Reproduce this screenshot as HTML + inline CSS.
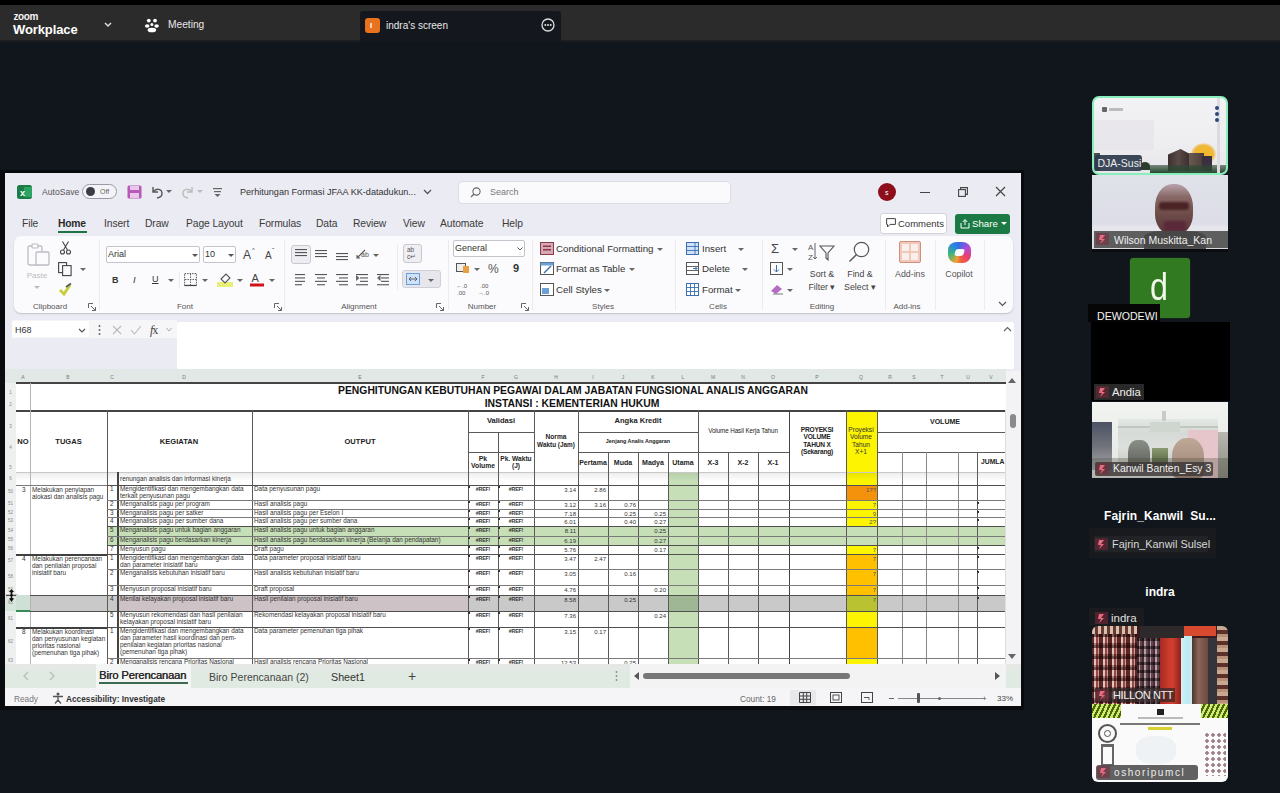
<!DOCTYPE html><html><head><meta charset="utf-8"><style>
*{margin:0;padding:0;box-sizing:border-box}
html,body{width:1280px;height:793px;overflow:hidden;background:#10161c;font-family:"Liberation Sans",sans-serif}
.a{position:absolute}
.t{position:absolute;white-space:nowrap;line-height:1}
svg{overflow:visible}
</style></head><body>
<div class="a" style="left:0px;top:0px;width:1280px;height:5px;background:#000;"></div>
<div class="a" style="left:0px;top:5px;width:1280px;height:35px;background:#2b2b2b;"></div>
<div class="a" style="left:0px;top:40px;width:1280px;height:2px;background:#1c1e22;"></div>
<div class="t" style="left:13.5px;top:11.5px;font-size:10px;color:#f4f4f4;font-weight:bold;letter-spacing:-0.4px">zoom</div>
<div class="t" style="left:13px;top:22.5px;font-size:13px;color:#fff;font-weight:bold;letter-spacing:-0.1px">Workplace</div>
<svg class="a" style="left:104px;top:21.5px;" width="8" height="6" viewBox="0 0 8 6"><path d="M1 1 L4 4 L7 1" stroke="#ddd" stroke-width="1.5" fill="none"/></svg>
<svg class="a" style="left:144px;top:17px;" width="17" height="16" viewBox="0 0 17 16"><circle cx="4.8" cy="3.6" r="1.9" fill="#fff"/><circle cx="11" cy="3.6" r="1.9" fill="#fff"/><ellipse cx="3.2" cy="9" rx="2.3" ry="1.8" fill="#fff"/><circle cx="7.9" cy="7.6" r="1.5" fill="#fff"/><ellipse cx="12.6" cy="9" rx="2.3" ry="1.8" fill="#fff"/><ellipse cx="7.9" cy="13" rx="4.3" ry="2.3" fill="#fff"/></svg>
<div class="t" style="left:168px;top:20.4px;font-size:10.2px;color:#e8e8e8;font-weight:normal;">Meeting</div>
<div class="a" style="left:360px;top:11px;width:201px;height:31px;background:#14181e;border-radius:3px 3px 0 0"></div>
<div class="a" style="left:365px;top:18px;width:15px;height:15px;background:#e8731c;border-radius:3px"></div>
<div class="t" style="left:370px;top:21.5px;font-size:8px;color:#fff;font-weight:bold;">I</div>
<div class="t" style="left:386px;top:20.5px;font-size:10px;color:#e8e8e8;font-weight:normal;">indra's screen</div>
<svg class="a" style="left:541px;top:18px;" width="14" height="14" viewBox="0 0 14 14"><circle cx="7" cy="7" r="6" stroke="#ddd" stroke-width="1.3" fill="none"/><circle cx="4.3" cy="7" r="1" fill="#ddd"/><circle cx="7" cy="7" r="1" fill="#ddd"/><circle cx="9.7" cy="7" r="1" fill="#ddd"/></svg>
<div class="a" style="left:0px;top:170px;width:1024px;height:540px;background:#090b0f;"></div>
<div class="a" style="left:5px;top:173px;width:1016px;height:533px;background:#ebebf3;"></div>
<svg class="a" style="left:17px;top:185px;" width="15" height="14" viewBox="0 0 15 14"><rect x="0" y="0" width="15" height="14" rx="2.5" fill="#1d7b45"/><rect x="7" y="2" width="8" height="10" fill="#2ea464"/><text x="3" y="10.5" font-size="9" font-weight="bold" fill="#fff" font-family="Liberation Sans">x</text></svg>
<div class="t" style="left:42px;top:188.2px;font-size:8.6px;color:#555;font-weight:normal;">AutoSave</div>
<div class="a" style="left:82px;top:184px;width:35px;height:15px;background:#f4f4f8;border:1px solid #9a9aa6;border-radius:8px"></div>
<div class="a" style="left:86px;top:187px;width:9px;height:9px;border-radius:50%;background:#3c3c48"></div>
<div class="t" style="left:100px;top:188.0px;font-size:7px;color:#666;font-weight:normal;">Off</div>
<svg class="a" style="left:127px;top:185px;" width="15" height="14" viewBox="0 0 15 14"><rect x="0.5" y="0.5" width="14" height="13" rx="1.5" fill="#b659b8"/><rect x="3" y="1" width="9" height="4" fill="#e9c6ea"/><rect x="3" y="8" width="9" height="5" fill="#e9c6ea"/></svg>
<svg class="a" style="left:150px;top:185px;" width="14" height="14" viewBox="0 0 14 14"><path d="M3 2 L3 7 L8 7" stroke="#555" stroke-width="1.4" fill="none"/><path d="M3.3 6.7 C6 3, 12 3.5, 12 8.5 C12 11, 10 12.5, 7 13" stroke="#555" stroke-width="1.4" fill="none"/></svg>
<svg class="a" style="left:166px;top:190px;" width="6" height="4" viewBox="0 0 6 4"><path d="M0 0 L6 0 L3 3z" fill="#666"/></svg>
<svg class="a" style="left:181px;top:185px;" width="14" height="14" viewBox="0 0 14 14"><path d="M11 2 L11 7 L6 7" stroke="#bbb" stroke-width="1.4" fill="none"/><path d="M10.7 6.7 C8 3, 2 3.5, 2 8.5 C2 11, 4 12.5, 7 13" stroke="#bbb" stroke-width="1.4" fill="none"/></svg>
<svg class="a" style="left:197px;top:190px;" width="6" height="4" viewBox="0 0 6 4"><path d="M0 0 L6 0 L3 3z" fill="#bbb"/></svg>
<svg class="a" style="left:213px;top:187px;" width="9" height="10" viewBox="0 0 9 10"><rect x="0" y="1" width="9" height="1.2" fill="#666"/><rect x="1" y="4" width="7" height="1.2" fill="#666"/><path d="M1.5 7 L7.5 7 L4.5 10z" fill="#666"/></svg>
<div class="t" style="left:240px;top:187.9px;font-size:9.1px;color:#333;font-weight:normal;">Perhitungan Formasi JFAA KK-datadukun...</div>
<svg class="a" style="left:423px;top:189px;" width="9" height="6" viewBox="0 0 9 6"><path d="M1 1 L4.5 4.5 L8 1" stroke="#555" stroke-width="1.3" fill="none"/></svg>
<div class="a" style="left:458px;top:181px;width:273px;height:23px;background:#fafafd;border:1px solid #dcdce6;border-radius:4px"></div>
<svg class="a" style="left:470px;top:187px;" width="11" height="11" viewBox="0 0 11 11"><circle cx="6.5" cy="4.5" r="3.6" stroke="#666" stroke-width="1.1" fill="none"/><path d="M4 7 L1 10" stroke="#666" stroke-width="1.2"/></svg>
<div class="t" style="left:490px;top:188.0px;font-size:9px;color:#777;font-weight:normal;">Search</div>
<div class="a" style="left:878px;top:183px;width:18px;height:18px;border-radius:50%;background:#8e0f1c"></div>
<div class="t" style="left:885px;top:188.5px;font-size:7px;color:#fff;font-weight:normal;">s</div>
<div class="a" style="left:920px;top:192px;width:10px;height:1.2px;background:#444;"></div>
<svg class="a" style="left:958px;top:187px;" width="10" height="10" viewBox="0 0 10 10"><rect x="0.6" y="2.6" width="6.8" height="6.8" stroke="#444" stroke-width="1.1" fill="none"/><path d="M2.6 2.5 L2.6 0.6 L9.4 0.6 L9.4 7.4 L7.5 7.4" stroke="#444" stroke-width="1.1" fill="none"/></svg>
<svg class="a" style="left:995px;top:186px;" width="11" height="11" viewBox="0 0 11 11"><path d="M1 1 L10 10 M10 1 L1 10" stroke="#444" stroke-width="1.2"/></svg>
<div class="t" style="left:22px;top:219.3px;font-size:10.3px;color:#3b3b3b;font-weight:normal;letter-spacing:-0.1px">File</div>
<div class="t" style="left:58px;top:219.3px;font-size:10.3px;color:#2b2b2b;font-weight:bold;letter-spacing:-0.2px">Home</div>
<div class="t" style="left:104px;top:219.3px;font-size:10.3px;color:#3b3b3b;font-weight:normal;letter-spacing:-0.1px">Insert</div>
<div class="t" style="left:145px;top:219.3px;font-size:10.3px;color:#3b3b3b;font-weight:normal;letter-spacing:-0.1px">Draw</div>
<div class="t" style="left:186px;top:219.3px;font-size:10.3px;color:#3b3b3b;font-weight:normal;letter-spacing:-0.1px">Page Layout</div>
<div class="t" style="left:259px;top:219.3px;font-size:10.3px;color:#3b3b3b;font-weight:normal;letter-spacing:-0.1px">Formulas</div>
<div class="t" style="left:316px;top:219.3px;font-size:10.3px;color:#3b3b3b;font-weight:normal;letter-spacing:-0.1px">Data</div>
<div class="t" style="left:353px;top:219.3px;font-size:10.3px;color:#3b3b3b;font-weight:normal;letter-spacing:-0.1px">Review</div>
<div class="t" style="left:403px;top:219.3px;font-size:10.3px;color:#3b3b3b;font-weight:normal;letter-spacing:-0.1px">View</div>
<div class="t" style="left:440px;top:219.3px;font-size:10.3px;color:#3b3b3b;font-weight:normal;letter-spacing:-0.1px">Automate</div>
<div class="t" style="left:502px;top:219.3px;font-size:10.3px;color:#3b3b3b;font-weight:normal;letter-spacing:-0.1px">Help</div>
<div class="a" style="left:58px;top:231px;width:29px;height:2px;background:#217346;"></div>
<div class="a" style="left:880px;top:213px;width:67px;height:21px;background:#fff;border:1px solid #d2d2da;border-radius:3px"></div>
<svg class="a" style="left:886px;top:218px;" width="10" height="10" viewBox="0 0 10 10"><path d="M0.6 0.6 H9.4 V6.4 H4 L1.5 9 V6.4 H0.6 Z" stroke="#444" stroke-width="1" fill="none"/></svg>
<div class="t" style="left:898px;top:218.8px;font-size:9.5px;color:#333;font-weight:normal;">Comments</div>
<div class="a" style="left:955px;top:214px;width:55px;height:20px;background:#1b7a43;border-radius:3px"></div>
<svg class="a" style="left:960px;top:218px;" width="11" height="11" viewBox="0 0 11 11"><path d="M1 5 V10 H9 V5" stroke="#fff" stroke-width="1" fill="none"/><path d="M5 7 V2 M2.8 4 L5 1.5 L7.2 4" stroke="#fff" stroke-width="1" fill="none"/></svg>
<div class="t" style="left:972px;top:218.7px;font-size:9.7px;color:#fff;font-weight:normal;">Share</div>
<svg class="a" style="left:1001px;top:222px;" width="6" height="3" viewBox="0 0 6 3"><path d="M0 0 H6 L3 3z" fill="#fff"/></svg>
<div class="a" style="left:14px;top:236px;width:999px;height:77px;background:#fbfbfd;border-radius:7px;box-shadow:0 1px 1.5px rgba(0,0,0,.18)"></div>
<svg class="a" style="left:27px;top:243px;" width="24" height="24" viewBox="0 0 24 24"><rect x="1" y="3" width="14" height="19" rx="1.5" stroke="#bdbdc4" stroke-width="1.3" fill="none"/><rect x="5" y="1" width="6" height="4" rx="1" stroke="#bdbdc4" stroke-width="1.2" fill="#fbfbfd"/><rect x="9" y="9" width="13" height="13" rx="1" stroke="#bdbdc4" stroke-width="1.3" fill="#fbfbfd"/></svg>
<div class="t" style="left:-463px;width:1000px;text-align:center;top:272.0px;font-size:8px;color:#bbb;font-weight:normal;">Paste</div>
<svg class="a" style="left:34px;top:286px;" width="6" height="3" viewBox="0 0 6 3"><path d="M0 0 H6 L3 3z" fill="#bbb"/></svg>
<svg class="a" style="left:60px;top:241px;" width="11" height="14" viewBox="0 0 11 14"><circle cx="2.5" cy="11" r="2" stroke="#444" stroke-width="1.1" fill="none"/><circle cx="8.5" cy="11" r="2" stroke="#444" stroke-width="1.1" fill="none"/><path d="M3.5 9 L8.5 0.5 M7.5 9 L2.5 0.5" stroke="#444" stroke-width="1.1"/></svg>
<svg class="a" style="left:58px;top:262px;" width="14" height="14" viewBox="0 0 14 14"><rect x="0.6" y="0.6" width="8" height="10" stroke="#444" stroke-width="1.1" fill="none"/><rect x="4.6" y="3.6" width="8.5" height="10" stroke="#444" stroke-width="1.1" fill="#fbfbfd"/></svg>
<svg class="a" style="left:80px;top:268px;" width="6" height="3" viewBox="0 0 6 3"><path d="M0 0 H6 L3 3z" fill="#666"/></svg>
<svg class="a" style="left:58px;top:283px;" width="14" height="13" viewBox="0 0 14 13"><path d="M2 7 L6 11 L12 2" stroke="#c8cf3a" stroke-width="3" fill="none"/><path d="M8 4 L13 0.5" stroke="#555" stroke-width="1.6"/></svg>
<div class="t" style="left:-450px;width:1000px;text-align:center;top:303.0px;font-size:8px;color:#555;font-weight:normal;">Clipboard</div>
<svg class="a" style="left:88px;top:303px;" width="8" height="8" viewBox="0 0 8 8"><path d="M0.5 0.5 H5 M0.5 0.5 V5" stroke="#666" stroke-width="1"/><path d="M3 3 L7.5 7.5 M7.5 4 V7.5 H4" stroke="#666" stroke-width="1" fill="none"/></svg>
<div class="a" style="left:99px;top:240px;width:1px;height:70px;background:#ebebef;"></div>
<div class="a" style="left:106px;top:246px;width:94px;height:17px;background:#fff;border:1px solid #c4c4cc;border-radius:2px"></div>
<div class="t" style="left:108px;top:250.0px;font-size:9px;color:#333;font-weight:normal;">Arial</div>
<svg class="a" style="left:192px;top:254px;" width="6" height="3" viewBox="0 0 6 3"><path d="M0 0 H6 L3 3z" fill="#555"/></svg>
<div class="a" style="left:203px;top:246px;width:33px;height:17px;background:#fff;border:1px solid #c4c4cc;border-radius:2px"></div>
<div class="t" style="left:205px;top:250.0px;font-size:9px;color:#333;font-weight:normal;">10</div>
<svg class="a" style="left:228px;top:254px;" width="6" height="3" viewBox="0 0 6 3"><path d="M0 0 H6 L3 3z" fill="#555"/></svg>
<div class="t" style="left:243px;top:248.5px;font-size:12px;color:#444;font-weight:normal;">A</div>
<div class="t" style="left:252px;top:247.0px;font-size:6px;color:#444;font-weight:normal;">^</div>
<div class="t" style="left:265px;top:250.5px;font-size:10px;color:#444;font-weight:normal;">A</div>
<div class="t" style="left:272px;top:246.5px;font-size:7px;color:#444;font-weight:normal;">ˇ</div>
<div class="t" style="left:112px;top:275.5px;font-size:9px;color:#333;font-weight:bold;">B</div>
<div class="t" style="left:133px;top:275.2px;font-size:9.5px;color:#333;font-weight:normal;font-style:italic">I</div>
<div class="t" style="left:152px;top:274.5px;font-size:9px;color:#333;font-weight:normal;text-decoration:underline">U</div>
<svg class="a" style="left:168px;top:279px;" width="6" height="3" viewBox="0 0 6 3"><path d="M0 0 H6 L3 3z" fill="#666"/></svg>
<div class="a" style="left:179px;top:272px;width:1px;height:16px;background:#ebebef;"></div>
<svg class="a" style="left:184px;top:273px;" width="13" height="13" viewBox="0 0 13 13"><rect x="0.6" y="0.6" width="11.8" height="11.8" stroke="#555" stroke-width="1" fill="none" stroke-dasharray="1.5 1"/><path d="M6.5 1 V12 M1 6.5 H12" stroke="#555" stroke-width="0.9" stroke-dasharray="1.5 1"/><path d="M0.5 12.5 H12.5" stroke="#444" stroke-width="1.2"/></svg>
<svg class="a" style="left:202px;top:279px;" width="6" height="3" viewBox="0 0 6 3"><path d="M0 0 H6 L3 3z" fill="#666"/></svg>
<svg class="a" style="left:217px;top:272px;" width="16" height="15" viewBox="0 0 16 15"><rect x="0" y="10" width="16" height="5" fill="#e8f07a"/><path d="M4 7 L9 2 L13 6 L8 11z" stroke="#555" stroke-width="1.1" fill="none"/></svg>
<svg class="a" style="left:237px;top:279px;" width="6" height="3" viewBox="0 0 6 3"><path d="M0 0 H6 L3 3z" fill="#666"/></svg>
<svg class="a" style="left:250px;top:272px;" width="14" height="15" viewBox="0 0 14 15"><text x="1.5" y="10" font-size="11" fill="#444" font-family="Liberation Sans">A</text><rect x="0" y="11.5" width="14" height="3" fill="#d0121b"/></svg>
<svg class="a" style="left:269px;top:279px;" width="6" height="3" viewBox="0 0 6 3"><path d="M0 0 H6 L3 3z" fill="#666"/></svg>
<div class="t" style="left:-315px;width:1000px;text-align:center;top:303.0px;font-size:8px;color:#555;font-weight:normal;">Font</div>
<svg class="a" style="left:274px;top:303px;" width="8" height="8" viewBox="0 0 8 8"><path d="M0.5 0.5 H5 M0.5 0.5 V5" stroke="#666" stroke-width="1"/><path d="M3 3 L7.5 7.5 M7.5 4 V7.5 H4" stroke="#666" stroke-width="1" fill="none"/></svg>
<div class="a" style="left:284px;top:240px;width:1px;height:70px;background:#ebebef;"></div>
<div class="a" style="left:291px;top:245px;width:20px;height:19px;background:#eeeef2;border:1px solid #c8c8d0;border-radius:3px"></div>
<svg class="a" style="left:295px;top:249px;" width="12" height="9" viewBox="0 0 12 9"><rect x="0.0" y="0" width="12" height="1.1" fill="#555"/><rect x="0.0" y="3" width="12" height="1.1" fill="#555"/><rect x="0.0" y="6" width="12" height="1.1" fill="#555"/></svg>
<svg class="a" style="left:315px;top:250px;" width="12" height="9" viewBox="0 0 12 9"><rect x="0.0" y="0" width="12" height="1.1" fill="#555"/><rect x="0.0" y="3" width="12" height="1.1" fill="#555"/><rect x="0.0" y="6" width="12" height="1.1" fill="#555"/></svg>
<svg class="a" style="left:336px;top:253px;" width="12" height="9" viewBox="0 0 12 9"><rect x="0.0" y="0" width="12" height="1.1" fill="#555"/><rect x="0.0" y="3" width="12" height="1.1" fill="#555"/><rect x="0.0" y="6" width="12" height="1.1" fill="#555"/></svg>
<svg class="a" style="left:356px;top:248px;" width="19" height="12" viewBox="0 0 19 12"><path d="M1 10 L9 2 M4 10 L1 10 L1 7" stroke="#555" stroke-width="1.1" fill="none"/><text x="5" y="9" font-size="7" fill="#555" font-family="Liberation Sans">ab</text></svg>
<svg class="a" style="left:373px;top:254px;" width="6" height="3" viewBox="0 0 6 3"><path d="M0 0 H6 L3 3z" fill="#666"/></svg>
<svg class="a" style="left:295px;top:274px;" width="12" height="13.6" viewBox="0 0 12 13.6"><rect x="0" y="0.0" width="10" height="1.1" fill="#555"/><rect x="0" y="3.4" width="10" height="1.1" fill="#555"/><rect x="0" y="6.8" width="10" height="1.1" fill="#555"/><rect x="0" y="10.2" width="7" height="1.1" fill="#555"/></svg>
<svg class="a" style="left:315px;top:274px;" width="12" height="13.6" viewBox="0 0 12 13.6"><rect x="0.0" y="0.0" width="12" height="1.1" fill="#555"/><rect x="2.0" y="3.4" width="8" height="1.1" fill="#555"/><rect x="0.0" y="6.8" width="12" height="1.1" fill="#555"/><rect x="2.0" y="10.2" width="8" height="1.1" fill="#555"/></svg>
<svg class="a" style="left:336px;top:274px;" width="12" height="13.6" viewBox="0 0 12 13.6"><rect x="0" y="0.0" width="12" height="1.1" fill="#555"/><rect x="3" y="3.4" width="9" height="1.1" fill="#555"/><rect x="0" y="6.8" width="12" height="1.1" fill="#555"/><rect x="3" y="10.2" width="9" height="1.1" fill="#555"/></svg>
<svg class="a" style="left:356px;top:274px;" width="12" height="13.6" viewBox="0 0 12 13.6"><rect x="0" y="0.0" width="12" height="1.1" fill="#555"/><rect x="4" y="3.4" width="8" height="1.1" fill="#555"/><rect x="4" y="6.8" width="8" height="1.1" fill="#555"/><rect x="0" y="10.2" width="12" height="1.1" fill="#555"/></svg>
<svg class="a" style="left:356px;top:275px;" width="4" height="6" viewBox="0 0 4 6"><path d="M0 0 L3.5 3 L0 6z" fill="#666"/></svg>
<svg class="a" style="left:377px;top:274px;" width="12" height="13.6" viewBox="0 0 12 13.6"><rect x="0" y="0.0" width="12" height="1.1" fill="#555"/><rect x="4" y="3.4" width="8" height="1.1" fill="#555"/><rect x="4" y="6.8" width="8" height="1.1" fill="#555"/><rect x="0" y="10.2" width="12" height="1.1" fill="#555"/></svg>
<svg class="a" style="left:377px;top:275px;" width="4" height="6" viewBox="0 0 4 6"><path d="M3.5 0 L0 3 L3.5 6z" fill="#666"/></svg>
<div class="a" style="left:397px;top:245px;width:1px;height:45px;background:#ebebef;"></div>
<div class="a" style="left:403px;top:244px;width:19px;height:19px;background:#efeff3;border:1px solid #c8c8d0;border-radius:3px"></div>
<div class="t" style="left:407px;top:246.8px;font-size:6.5px;color:#555;font-weight:normal;">ab</div>
<div class="t" style="left:407px;top:253.8px;font-size:6.5px;color:#555;font-weight:normal;">c↵</div>
<div class="a" style="left:402px;top:270px;width:39px;height:18px;background:#e6e6ec;border:1px solid #d0d0d8;border-radius:3px"></div>
<svg class="a" style="left:406px;top:273px;" width="14" height="12" viewBox="0 0 14 12"><rect x="0.5" y="0.5" width="13" height="11" stroke="#6aa0d8" stroke-width="1" fill="#cfe2f7"/><path d="M3 6 H11 M3 6 L5 4 M3 6 L5 8 M11 6 L9 4 M11 6 L9 8" stroke="#555" stroke-width="0.9" fill="none"/></svg>
<svg class="a" style="left:428px;top:279px;" width="6" height="3" viewBox="0 0 6 3"><path d="M0 0 H6 L3 3z" fill="#666"/></svg>
<div class="t" style="left:-141px;width:1000px;text-align:center;top:303.0px;font-size:8px;color:#555;font-weight:normal;">Alignment</div>
<svg class="a" style="left:436px;top:303px;" width="8" height="8" viewBox="0 0 8 8"><path d="M0.5 0.5 H5 M0.5 0.5 V5" stroke="#666" stroke-width="1"/><path d="M3 3 L7.5 7.5 M7.5 4 V7.5 H4" stroke="#666" stroke-width="1" fill="none"/></svg>
<div class="a" style="left:448px;top:240px;width:1px;height:70px;background:#ebebef;"></div>
<div class="a" style="left:453px;top:240px;width:72px;height:17px;background:#fff;border:1px solid #c4c4cc;border-radius:2px"></div>
<div class="t" style="left:455px;top:244.0px;font-size:9px;color:#333;font-weight:normal;">General</div>
<svg class="a" style="left:517px;top:247px;" width="6" height="4" viewBox="0 0 6 4"><path d="M0.5 0.5 L3 3 L5.5 0.5" stroke="#555" stroke-width="1" fill="none"/></svg>
<svg class="a" style="left:456px;top:263px;" width="14" height="11" viewBox="0 0 14 11"><rect x="0.5" y="0.5" width="9" height="8" stroke="#555" stroke-width="1" fill="#eee"/><rect x="7" y="3" width="6" height="7" fill="#e8a040"/></svg>
<svg class="a" style="left:474px;top:268px;" width="6" height="3" viewBox="0 0 6 3"><path d="M0 0 H6 L3 3z" fill="#666"/></svg>
<div class="t" style="left:488px;top:262.5px;font-size:12px;color:#555;font-weight:normal;">%</div>
<div class="t" style="left:513px;top:263.0px;font-size:11px;color:#333;font-weight:bold;">9</div>
<svg class="a" style="left:456px;top:282px;" width="14" height="14" viewBox="0 0 14 14"><text x="0" y="6" font-size="6" fill="#555" font-family="Liberation Sans">←.0</text><text x="1" y="13" font-size="6" fill="#555" font-family="Liberation Sans">.00</text></svg>
<svg class="a" style="left:478px;top:282px;" width="14" height="14" viewBox="0 0 14 14"><text x="2" y="6" font-size="6" fill="#555" font-family="Liberation Sans">.00</text><text x="0" y="13" font-size="6" fill="#555" font-family="Liberation Sans">→.0</text></svg>
<div class="t" style="left:-18px;width:1000px;text-align:center;top:303.0px;font-size:8px;color:#555;font-weight:normal;">Number</div>
<svg class="a" style="left:521px;top:303px;" width="8" height="8" viewBox="0 0 8 8"><path d="M0.5 0.5 H5 M0.5 0.5 V5" stroke="#666" stroke-width="1"/><path d="M3 3 L7.5 7.5 M7.5 4 V7.5 H4" stroke="#666" stroke-width="1" fill="none"/></svg>
<div class="a" style="left:532px;top:240px;width:1px;height:70px;background:#ebebef;"></div>
<svg class="a" style="left:540px;top:242px;" width="14" height="13" viewBox="0 0 14 13"><rect x="0.5" y="0.5" width="13" height="12" stroke="#8a3a4a" stroke-width="1" fill="#d8a8b4"/><rect x="3" y="3.5" width="8" height="1.5" fill="#8a3a4a"/><rect x="3" y="7" width="8" height="1.5" fill="#8a3a4a"/></svg>
<div class="t" style="left:556px;top:243.7px;font-size:9.7px;color:#333;font-weight:normal;">Conditional Formatting</div>
<svg class="a" style="left:657px;top:248px;" width="6" height="3" viewBox="0 0 6 3"><path d="M0 0 H6 L3 3z" fill="#666"/></svg>
<svg class="a" style="left:540px;top:262px;" width="14" height="13" viewBox="0 0 14 13"><rect x="0.5" y="0.5" width="13" height="12" stroke="#555" stroke-width="1" fill="#fff"/><rect x="0.5" y="0.5" width="13" height="3" fill="#6aa0d8"/><path d="M4 11 L11 4" stroke="#3a6fb0" stroke-width="1.5"/></svg>
<div class="t" style="left:556px;top:263.6px;font-size:9.7px;color:#333;font-weight:normal;">Format as Table</div>
<svg class="a" style="left:629px;top:268px;" width="6" height="3" viewBox="0 0 6 3"><path d="M0 0 H6 L3 3z" fill="#666"/></svg>
<svg class="a" style="left:540px;top:283px;" width="14" height="13" viewBox="0 0 14 13"><rect x="0.5" y="0.5" width="13" height="12" stroke="#555" stroke-width="1" fill="#fff"/><rect x="2" y="5" width="7" height="6" fill="#6aa0d8"/></svg>
<div class="t" style="left:556px;top:284.6px;font-size:9.7px;color:#333;font-weight:normal;">Cell Styles</div>
<svg class="a" style="left:604px;top:289px;" width="6" height="3" viewBox="0 0 6 3"><path d="M0 0 H6 L3 3z" fill="#666"/></svg>
<div class="t" style="left:103px;width:1000px;text-align:center;top:303.0px;font-size:8px;color:#555;font-weight:normal;">Styles</div>
<div class="a" style="left:675px;top:240px;width:1px;height:70px;background:#ebebef;"></div>
<svg class="a" style="left:686px;top:242px;" width="13" height="13" viewBox="0 0 13 13"><rect x="0.5" y="0.5" width="12" height="12" stroke="#3a6fb0" stroke-width="1" fill="#cfe2f7"/><path d="M0.5 4.5 H12.5 M0.5 8.5 H12.5 M9 0.5 V12.5" stroke="#3a6fb0" stroke-width="0.9"/></svg>
<div class="t" style="left:702px;top:243.7px;font-size:9.7px;color:#333;font-weight:normal;">Insert</div>
<svg class="a" style="left:738px;top:248px;" width="6" height="3" viewBox="0 0 6 3"><path d="M0 0 H6 L3 3z" fill="#666"/></svg>
<svg class="a" style="left:686px;top:262px;" width="13" height="13" viewBox="0 0 13 13"><rect x="0.5" y="0.5" width="12" height="12" stroke="#555" stroke-width="1" fill="#fff"/><path d="M0.5 4.5 H12.5 M0.5 8.5 H12.5" stroke="#555" stroke-width="0.9"/><path d="M7 6.5 L11 6.5 M9.5 5 L11 6.5 L9.5 8" stroke="#3a6fb0" stroke-width="1" fill="none"/></svg>
<div class="t" style="left:702px;top:263.6px;font-size:9.7px;color:#333;font-weight:normal;">Delete</div>
<svg class="a" style="left:742px;top:268px;" width="6" height="3" viewBox="0 0 6 3"><path d="M0 0 H6 L3 3z" fill="#666"/></svg>
<svg class="a" style="left:686px;top:283px;" width="13" height="13" viewBox="0 0 13 13"><rect x="0.5" y="0.5" width="12" height="12" stroke="#3a6fb0" stroke-width="1" fill="#fff"/><path d="M0.5 4.5 H12.5 M0.5 8.5 H12.5 M4.5 0.5 V12.5 M8.5 0.5 V12.5" stroke="#3a6fb0" stroke-width="0.9"/></svg>
<div class="t" style="left:702px;top:284.6px;font-size:9.7px;color:#333;font-weight:normal;">Format</div>
<svg class="a" style="left:735px;top:289px;" width="6" height="3" viewBox="0 0 6 3"><path d="M0 0 H6 L3 3z" fill="#666"/></svg>
<div class="t" style="left:218px;width:1000px;text-align:center;top:303.0px;font-size:8px;color:#555;font-weight:normal;">Cells</div>
<div class="a" style="left:762px;top:240px;width:1px;height:70px;background:#ebebef;"></div>
<div class="t" style="left:771px;top:241.5px;font-size:13px;color:#444;font-weight:normal;">Σ</div>
<svg class="a" style="left:792px;top:248px;" width="6" height="3" viewBox="0 0 6 3"><path d="M0 0 H6 L3 3z" fill="#666"/></svg>
<svg class="a" style="left:770px;top:262px;" width="13" height="13" viewBox="0 0 13 13"><rect x="0.5" y="0.5" width="12" height="12" stroke="#555" stroke-width="1" fill="none"/><path d="M6.5 3 V10 M4 7.5 L6.5 10 L9 7.5" stroke="#3a6fb0" stroke-width="1" fill="none"/></svg>
<svg class="a" style="left:787px;top:268px;" width="6" height="3" viewBox="0 0 6 3"><path d="M0 0 H6 L3 3z" fill="#666"/></svg>
<svg class="a" style="left:770px;top:283px;" width="14" height="12" viewBox="0 0 14 12"><path d="M1 8 L7 2 L12 6 L6 11 Z" fill="#b46cc4"/><path d="M3 11 H13" stroke="#777" stroke-width="1"/></svg>
<svg class="a" style="left:787px;top:289px;" width="6" height="3" viewBox="0 0 6 3"><path d="M0 0 H6 L3 3z" fill="#666"/></svg>
<svg class="a" style="left:808px;top:241px;" width="28" height="22" viewBox="0 0 28 22"><text x="0" y="9" font-size="8" fill="#555" font-family="Liberation Sans">A</text><text x="0" y="19" font-size="8" fill="#555" font-family="Liberation Sans">Z</text><path d="M7 2 V18 M5 16 L7 18 L9 16" stroke="#555" stroke-width="0.9" fill="none"/><path d="M12 5 H26 L20 12 V19 L18 17 V12 Z" stroke="#555" stroke-width="1.1" fill="none"/></svg>
<div class="t" style="left:322px;width:1000px;text-align:center;top:269.6px;font-size:8.8px;color:#444;font-weight:normal;">Sort &amp;</div>
<div class="t" style="left:322px;width:1000px;text-align:center;top:282.6px;font-size:8.8px;color:#444;font-weight:normal;">Filter ▾</div>
<svg class="a" style="left:848px;top:241px;" width="24" height="22" viewBox="0 0 24 22"><circle cx="13.5" cy="8.5" r="7.2" stroke="#555" stroke-width="1.2" fill="none"/><path d="M8.3 13.8 L1.5 20.5" stroke="#555" stroke-width="1.5"/></svg>
<div class="t" style="left:360px;width:1000px;text-align:center;top:269.6px;font-size:8.8px;color:#444;font-weight:normal;">Find &amp;</div>
<div class="t" style="left:360px;width:1000px;text-align:center;top:282.6px;font-size:8.8px;color:#444;font-weight:normal;">Select ▾</div>
<div class="t" style="left:322px;width:1000px;text-align:center;top:303.0px;font-size:8px;color:#555;font-weight:normal;">Editing</div>
<div class="a" style="left:885px;top:240px;width:1px;height:70px;background:#ebebef;"></div>
<svg class="a" style="left:899px;top:241px;" width="22" height="22" viewBox="0 0 22 22"><rect x="0.5" y="0.5" width="21" height="21" rx="1.5" fill="#f0c8bc" stroke="#d0907a" stroke-width="1"/><rect x="3" y="3" width="7" height="7" fill="#fff" opacity=".7"/><rect x="12" y="3" width="7" height="7" fill="#fff" opacity=".7"/><rect x="3" y="12" width="7" height="7" fill="#fff" opacity=".7"/><rect x="12" y="12" width="7" height="7" fill="#fff" opacity=".7"/></svg>
<div class="t" style="left:410px;width:1000px;text-align:center;top:269.6px;font-size:8.8px;color:#555;font-weight:normal;">Add-ins</div>
<div class="t" style="left:407px;width:1000px;text-align:center;top:303.0px;font-size:8px;color:#555;font-weight:normal;">Add-ins</div>
<div class="a" style="left:935px;top:240px;width:1px;height:70px;background:#ebebef;"></div>
<div class="a" style="left:948px;top:242px;width:23px;height:21px;border-radius:38%;background:conic-gradient(from 200deg,#f0a030,#3cb878 60deg,#2a86e0 120deg,#3a6ae8 160deg,#b04ad8 220deg,#e8406a 280deg,#f06040 330deg,#f0a030)"></div>
<div class="a" style="left:955px;top:249px;width:9px;height:7px;border-radius:30%;background:#fbfbfd;transform:skewX(-15deg)"></div>
<div class="t" style="left:459px;width:1000px;text-align:center;top:269.6px;font-size:8.8px;color:#555;font-weight:normal;">Copilot</div>
<div class="a" style="left:984px;top:240px;width:1px;height:70px;background:#ebebef;"></div>
<svg class="a" style="left:998px;top:301px;" width="9" height="6" viewBox="0 0 9 6"><path d="M1 1 L4.5 4.5 L8 1" stroke="#555" stroke-width="1.2" fill="none"/></svg>
<div class="a" style="left:12px;top:320px;width:165px;height:18px;background:#f6f6f9;"></div>
<div class="a" style="left:12px;top:321px;width:77px;height:16px;background:#fff;border-radius:2px"></div>
<div class="t" style="left:15px;top:326.0px;font-size:9px;color:#333;font-weight:normal;">H68</div>
<svg class="a" style="left:78px;top:328px;" width="8" height="5" viewBox="0 0 8 5"><path d="M1 1 L4 4 L7 1" stroke="#555" stroke-width="1.2" fill="none"/></svg>
<svg class="a" style="left:98px;top:324px;" width="3" height="12" viewBox="0 0 3 12"><circle cx="1.5" cy="2" r="1" fill="#666"/><circle cx="1.5" cy="6" r="1" fill="#666"/><circle cx="1.5" cy="10" r="1" fill="#666"/></svg>
<svg class="a" style="left:112px;top:325px;" width="10" height="10" viewBox="0 0 10 10"><path d="M1 1 L9 9 M9 1 L1 9" stroke="#bbb" stroke-width="1.1"/></svg>
<svg class="a" style="left:130px;top:325px;" width="12" height="10" viewBox="0 0 12 10"><path d="M1 5 L4.5 9 L11 1" stroke="#bbb" stroke-width="1.1" fill="none"/></svg>
<div class="t" style="left:150px;top:324.0px;font-size:12px;color:#444;font-weight:normal;font-family:Liberation Serif;letter-spacing:-1px"><i>f</i>x</div>
<svg class="a" style="left:166px;top:327px;" width="6" height="6" viewBox="0 0 6 6"><path d="M0.5 1 L3 4 L5.5 1" stroke="#aaa" stroke-width="1" fill="none"/></svg>
<div class="a" style="left:177px;top:322px;width:837px;height:47px;background:#fff;border-radius:2px"></div>
<svg class="a" style="left:1003px;top:326px;" width="9" height="6" viewBox="0 0 9 6"><path d="M1 5 L4.5 1.5 L8 5" stroke="#666" stroke-width="1.2" fill="none"/></svg>
<div class="a" style="left:5px;top:369px;width:1001px;height:14px;background:#e2e8e6;"></div>
<div class="a" style="left:16px;top:382px;width:990px;height:1.5px;background:#444;"></div>
<div class="a" style="left:16px;top:383.5px;width:990px;height:280.5px;background:#fff;"></div>
<div class="a" style="left:5px;top:383px;width:11px;height:281px;background:#eef0ef;"></div>
<div class="a" style="left:1006px;top:371px;width:15px;height:293px;background:#f3f3f5;"></div>
<svg class="a" style="left:1008px;top:378px;" width="8" height="6" viewBox="0 0 8 6"><path d="M0 5 L4 0 L8 5z" fill="#666"/></svg>
<div class="a" style="left:1010px;top:414px;width:6px;height:14px;background:#8a8a8a;border-radius:3px"></div>
<svg class="a" style="left:1008px;top:654px;" width="8" height="6" viewBox="0 0 8 6"><path d="M0 0 L4 5 L8 0z" fill="#666"/></svg>
<div class="a" style="left:668px;top:472px;width:30px;height:192px;background:#c6dfb7;"></div>
<div class="a" style="left:846px;top:410px;width:31px;height:75px;background:#fcf400;"></div>
<div class="a" style="left:846px;top:485px;width:31px;height:15px;background:#f5920c;"></div>
<div class="a" style="left:846px;top:500px;width:31px;height:26px;background:#fcf400;"></div>
<div class="a" style="left:846px;top:545px;width:31px;height:9px;background:#fcf400;"></div>
<div class="a" style="left:846px;top:554px;width:31px;height:41px;background:#ffc000;"></div>
<div class="a" style="left:846px;top:611px;width:31px;height:16px;background:#fcf400;"></div>
<div class="a" style="left:846px;top:627px;width:31px;height:31px;background:#ffc000;"></div>
<div class="a" style="left:846px;top:658px;width:31px;height:6px;background:#fcf400;"></div>
<div class="a" style="left:107px;top:526px;width:899px;height:19px;background:#c6dfb7;"></div>
<div class="a" style="left:16px;top:595px;width:990px;height:16px;background:#c9c9c9;"></div>
<div class="a" style="left:117px;top:595px;width:351px;height:16px;background:#cdc3c6;"></div>
<div class="a" style="left:668px;top:595px;width:30px;height:16px;background:#9fb794;"></div>
<div class="a" style="left:846px;top:595px;width:31px;height:16px;background:#b9c230;"></div>
<div class="a" style="left:5px;top:595px;width:11px;height:16px;background:#d7e6db;"></div>
<div class="a" style="left:16px;top:472px;width:990px;height:9px;background:linear-gradient(rgba(0,0,0,.08),rgba(0,0,0,0))"></div>
<div class="a" style="left:16px;top:410px;width:990px;height:1.5px;background:#444;"></div>
<div class="a" style="left:468px;top:432px;width:66px;height:1px;background:#5a5a5a;"></div>
<div class="a" style="left:578px;top:432px;width:120px;height:1px;background:#5a5a5a;"></div>
<div class="a" style="left:877px;top:432px;width:129px;height:1px;background:#5a5a5a;"></div>
<div class="a" style="left:468px;top:452px;width:66px;height:1px;background:#5a5a5a;"></div>
<div class="a" style="left:578px;top:452px;width:120px;height:1px;background:#5a5a5a;"></div>
<div class="a" style="left:698px;top:452px;width:91px;height:1px;background:#5a5a5a;"></div>
<div class="a" style="left:877px;top:452px;width:129px;height:1px;background:#5a5a5a;"></div>
<div class="a" style="left:16px;top:472px;width:990px;height:1px;background:#c8c8c8;"></div>
<div class="a" style="left:107px;top:410px;width:1px;height:254px;background:#5a5a5a;"></div>
<div class="a" style="left:252px;top:410px;width:1px;height:254px;background:#5a5a5a;"></div>
<div class="a" style="left:468px;top:410px;width:1px;height:254px;background:#5a5a5a;"></div>
<div class="a" style="left:534px;top:410px;width:1px;height:254px;background:#5a5a5a;"></div>
<div class="a" style="left:578px;top:410px;width:1px;height:254px;background:#5a5a5a;"></div>
<div class="a" style="left:698px;top:410px;width:1px;height:254px;background:#5a5a5a;"></div>
<div class="a" style="left:789px;top:410px;width:1px;height:254px;background:#444;"></div>
<div class="a" style="left:846px;top:410px;width:1px;height:254px;background:#5a5a5a;"></div>
<div class="a" style="left:877px;top:410px;width:1px;height:254px;background:#5a5a5a;"></div>
<div class="a" style="left:30px;top:383px;width:1px;height:281px;background:#b4b4b4;"></div>
<div class="a" style="left:117px;top:472px;width:1.5px;height:192px;background:#444;"></div>
<div class="a" style="left:498px;top:432px;width:1px;height:232px;background:#5a5a5a;"></div>
<div class="a" style="left:608px;top:452px;width:1px;height:212px;background:#5a5a5a;"></div>
<div class="a" style="left:638px;top:452px;width:1px;height:212px;background:#5a5a5a;"></div>
<div class="a" style="left:668px;top:452px;width:1px;height:212px;background:#5a5a5a;"></div>
<div class="a" style="left:728px;top:452px;width:1px;height:212px;background:#5a5a5a;"></div>
<div class="a" style="left:758px;top:452px;width:1px;height:212px;background:#5a5a5a;"></div>
<div class="a" style="left:977px;top:452px;width:1px;height:212px;background:#5a5a5a;"></div>
<div class="a" style="left:902px;top:452px;width:1px;height:212px;background:#8a8a8a;"></div>
<div class="a" style="left:926px;top:452px;width:1px;height:212px;background:#8a8a8a;"></div>
<div class="a" style="left:958px;top:452px;width:1px;height:212px;background:#8a8a8a;"></div>
<div class="a" style="left:16px;top:485px;width:990px;height:1.3px;background:#505050;"></div>
<div class="a" style="left:107px;top:500px;width:899px;height:1px;background:#7a7a7a;"></div>
<div class="a" style="left:107px;top:509px;width:899px;height:1px;background:#7a7a7a;"></div>
<div class="a" style="left:107px;top:517px;width:899px;height:1px;background:#7a7a7a;"></div>
<div class="a" style="left:107px;top:526px;width:899px;height:1.3px;background:#505050;"></div>
<div class="a" style="left:107px;top:536px;width:899px;height:1px;background:#7a7a7a;"></div>
<div class="a" style="left:107px;top:545px;width:899px;height:1.3px;background:#505050;"></div>
<div class="a" style="left:16px;top:554px;width:990px;height:1.3px;background:#505050;"></div>
<div class="a" style="left:107px;top:569px;width:899px;height:1px;background:#7a7a7a;"></div>
<div class="a" style="left:107px;top:585px;width:899px;height:1px;background:#7a7a7a;"></div>
<div class="a" style="left:16px;top:595px;width:990px;height:1.3px;background:#505050;"></div>
<div class="a" style="left:16px;top:611px;width:990px;height:1.3px;background:#505050;"></div>
<div class="a" style="left:16px;top:627px;width:990px;height:1.3px;background:#505050;"></div>
<div class="a" style="left:107px;top:658px;width:899px;height:1px;background:#7a7a7a;"></div>
<div class="a" style="left:16px;top:485px;width:91px;height:1px;background:#7a7a7a;"></div>
<div class="a" style="left:16px;top:554px;width:91px;height:1.5px;background:#404040;"></div>
<div class="a" style="left:16px;top:627px;width:91px;height:1.5px;background:#404040;"></div>
<div class="a" style="left:1005px;top:410px;width:1px;height:254px;background:#ddd;"></div>
<div class="t" style="left:73px;width:1000px;text-align:center;top:385.8px;font-size:10.35px;color:#111;font-weight:bold;">PENGHITUNGAN KEBUTUHAN PEGAWAI DALAM JABATAN FUNGSIONAL ANALIS ANGGARAN</div>
<div class="t" style="left:72px;width:1000px;text-align:center;top:398.8px;font-size:10.4px;color:#111;font-weight:bold;">INSTANSI : KEMENTERIAN HUKUM</div>
<div class="t" style="left:-477px;width:1000px;text-align:center;top:437.7px;font-size:7.56px;color:#222;font-weight:bold;">NO</div>
<div class="t" style="left:-431.5px;width:1000px;text-align:center;top:437.7px;font-size:7.56px;color:#222;font-weight:bold;">TUGAS</div>
<div class="t" style="left:-321px;width:1000px;text-align:center;top:437.7px;font-size:7.56px;color:#222;font-weight:bold;">KEGIATAN</div>
<div class="t" style="left:-140px;width:1000px;text-align:center;top:437.7px;font-size:7.56px;color:#222;font-weight:bold;">OUTPUT</div>
<div class="t" style="left:1px;width:1000px;text-align:center;top:417.2px;font-size:7.56px;color:#222;font-weight:bold;">Validasi</div>
<div class="t" style="left:-17px;width:1000px;text-align:center;top:455.6px;font-size:6.8px;color:#222;font-weight:bold;">Pk</div>
<div class="t" style="left:-17px;width:1000px;text-align:center;top:463.1px;font-size:6.8px;color:#222;font-weight:bold;">Volume</div>
<div class="t" style="left:16px;width:1000px;text-align:center;top:455.7px;font-size:6.6px;color:#222;font-weight:bold;">Pk. Waktu</div>
<div class="t" style="left:16px;width:1000px;text-align:center;top:463.2px;font-size:6.6px;color:#222;font-weight:bold;">(J)</div>
<div class="t" style="left:56px;width:1000px;text-align:center;top:433.7px;font-size:6.6px;color:#222;font-weight:bold;">Norma</div>
<div class="t" style="left:56px;width:1000px;text-align:center;top:441.8px;font-size:6.4px;color:#222;font-weight:bold;">Waktu (Jam)</div>
<div class="t" style="left:138px;width:1000px;text-align:center;top:417.2px;font-size:7.56px;color:#222;font-weight:bold;">Angka Kredit</div>
<div class="t" style="left:138px;width:1000px;text-align:center;top:439.3px;font-size:5.4px;color:#222;font-weight:bold;">Jenjang Analis Anggaran</div>
<div class="t" style="left:93px;width:1000px;text-align:center;top:458.5px;font-size:7.02px;color:#222;font-weight:bold;">Pertama</div>
<div class="t" style="left:123px;width:1000px;text-align:center;top:458.5px;font-size:7.02px;color:#222;font-weight:bold;">Muda</div>
<div class="t" style="left:153px;width:1000px;text-align:center;top:458.5px;font-size:7.02px;color:#222;font-weight:bold;">Madya</div>
<div class="t" style="left:183px;width:1000px;text-align:center;top:458.5px;font-size:7.02px;color:#222;font-weight:bold;">Utama</div>
<div class="t" style="left:243px;width:1000px;text-align:center;top:427.9px;font-size:6.3px;color:#222;font-weight:normal;letter-spacing:-0.1px">Volume Hasil Kerja Tahun</div>
<div class="t" style="left:213px;width:1000px;text-align:center;top:458.5px;font-size:7.02px;color:#222;font-weight:bold;">X-3</div>
<div class="t" style="left:243px;width:1000px;text-align:center;top:458.5px;font-size:7.02px;color:#222;font-weight:bold;">X-2</div>
<div class="t" style="left:273px;width:1000px;text-align:center;top:458.5px;font-size:7.02px;color:#222;font-weight:bold;">X-1</div>
<div class="t" style="left:317px;width:1000px;text-align:center;top:426.7px;font-size:6.6px;color:#222;font-weight:bold;letter-spacing:-0.2px">PROYEKSI</div>
<div class="t" style="left:317px;width:1000px;text-align:center;top:434.2px;font-size:6.6px;color:#222;font-weight:bold;letter-spacing:-0.2px">VOLUME</div>
<div class="t" style="left:317px;width:1000px;text-align:center;top:441.7px;font-size:6.6px;color:#222;font-weight:bold;letter-spacing:-0.2px">TAHUN X</div>
<div class="t" style="left:317px;width:1000px;text-align:center;top:449.2px;font-size:6.6px;color:#222;font-weight:bold;letter-spacing:-0.2px">(Sekarang)</div>
<div class="t" style="left:361px;width:1000px;text-align:center;top:426.7px;font-size:6.6px;color:#333;font-weight:normal;">Proyeksi</div>
<div class="t" style="left:361px;width:1000px;text-align:center;top:434.2px;font-size:6.6px;color:#333;font-weight:normal;">Volume</div>
<div class="t" style="left:361px;width:1000px;text-align:center;top:441.7px;font-size:6.6px;color:#333;font-weight:normal;">Tahun</div>
<div class="t" style="left:361px;width:1000px;text-align:center;top:449.2px;font-size:6.6px;color:#333;font-weight:normal;">X+1</div>
<div class="t" style="left:445px;width:1000px;text-align:center;top:417.5px;font-size:7.02px;color:#222;font-weight:bold;">VOLUME</div>
<div class="t" style="left:981px;top:458.6px;font-size:6.8px;color:#222;font-weight:bold;">JUMLA</div>
<div class="t" style="left:-477px;width:1000px;text-align:center;top:374.5px;font-size:5px;color:#777;font-weight:normal;">A</div>
<div class="t" style="left:-432px;width:1000px;text-align:center;top:374.5px;font-size:5px;color:#777;font-weight:normal;">B</div>
<div class="t" style="left:-388px;width:1000px;text-align:center;top:374.5px;font-size:5px;color:#777;font-weight:normal;">C</div>
<div class="t" style="left:-316px;width:1000px;text-align:center;top:374.5px;font-size:5px;color:#777;font-weight:normal;">D</div>
<div class="t" style="left:-140px;width:1000px;text-align:center;top:374.5px;font-size:5px;color:#777;font-weight:normal;">E</div>
<div class="t" style="left:-17px;width:1000px;text-align:center;top:374.5px;font-size:5px;color:#777;font-weight:normal;">F</div>
<div class="t" style="left:16px;width:1000px;text-align:center;top:374.5px;font-size:5px;color:#777;font-weight:normal;">G</div>
<div class="t" style="left:56px;width:1000px;text-align:center;top:374.5px;font-size:5px;color:#777;font-weight:normal;">H</div>
<div class="t" style="left:93px;width:1000px;text-align:center;top:374.5px;font-size:5px;color:#777;font-weight:normal;">I</div>
<div class="t" style="left:123px;width:1000px;text-align:center;top:374.5px;font-size:5px;color:#777;font-weight:normal;">J</div>
<div class="t" style="left:153px;width:1000px;text-align:center;top:374.5px;font-size:5px;color:#777;font-weight:normal;">K</div>
<div class="t" style="left:183px;width:1000px;text-align:center;top:374.5px;font-size:5px;color:#777;font-weight:normal;">L</div>
<div class="t" style="left:213px;width:1000px;text-align:center;top:374.5px;font-size:5px;color:#777;font-weight:normal;">M</div>
<div class="t" style="left:243px;width:1000px;text-align:center;top:374.5px;font-size:5px;color:#777;font-weight:normal;">N</div>
<div class="t" style="left:273px;width:1000px;text-align:center;top:374.5px;font-size:5px;color:#777;font-weight:normal;">O</div>
<div class="t" style="left:317px;width:1000px;text-align:center;top:374.5px;font-size:5px;color:#777;font-weight:normal;">P</div>
<div class="t" style="left:361px;width:1000px;text-align:center;top:374.5px;font-size:5px;color:#777;font-weight:normal;">Q</div>
<div class="t" style="left:390px;width:1000px;text-align:center;top:374.5px;font-size:5px;color:#777;font-weight:normal;">R</div>
<div class="t" style="left:414px;width:1000px;text-align:center;top:374.5px;font-size:5px;color:#777;font-weight:normal;">S</div>
<div class="t" style="left:442px;width:1000px;text-align:center;top:374.5px;font-size:5px;color:#777;font-weight:normal;">T</div>
<div class="t" style="left:468px;width:1000px;text-align:center;top:374.5px;font-size:5px;color:#777;font-weight:normal;">U</div>
<div class="t" style="left:491px;width:1000px;text-align:center;top:374.5px;font-size:5px;color:#777;font-weight:normal;">V</div>
<div class="t" style="left:-489.5px;width:1000px;text-align:center;top:390.8px;font-size:4.5px;color:#888;font-weight:normal;">1</div>
<div class="t" style="left:-489.5px;width:1000px;text-align:center;top:402.8px;font-size:4.5px;color:#888;font-weight:normal;">2</div>
<div class="t" style="left:-489.5px;width:1000px;text-align:center;top:424.8px;font-size:4.5px;color:#888;font-weight:normal;">3</div>
<div class="t" style="left:-489.5px;width:1000px;text-align:center;top:445.8px;font-size:4.5px;color:#888;font-weight:normal;">4</div>
<div class="t" style="left:-489.5px;width:1000px;text-align:center;top:465.8px;font-size:4.5px;color:#888;font-weight:normal;">5</div>
<div class="t" style="left:-489.5px;width:1000px;text-align:center;top:476.8px;font-size:4.5px;color:#888;font-weight:normal;">6</div>
<div class="t" style="left:-489.5px;width:1000px;text-align:center;top:489.8px;font-size:4.5px;color:#888;font-weight:normal;">50</div>
<div class="t" style="left:-489.5px;width:1000px;text-align:center;top:501.8px;font-size:4.5px;color:#888;font-weight:normal;">51</div>
<div class="t" style="left:-489.5px;width:1000px;text-align:center;top:510.8px;font-size:4.5px;color:#888;font-weight:normal;">52</div>
<div class="t" style="left:-489.5px;width:1000px;text-align:center;top:518.8px;font-size:4.5px;color:#888;font-weight:normal;">53</div>
<div class="t" style="left:-489.5px;width:1000px;text-align:center;top:528.8px;font-size:4.5px;color:#888;font-weight:normal;">54</div>
<div class="t" style="left:-489.5px;width:1000px;text-align:center;top:537.8px;font-size:4.5px;color:#888;font-weight:normal;">55</div>
<div class="t" style="left:-489.5px;width:1000px;text-align:center;top:546.8px;font-size:4.5px;color:#888;font-weight:normal;">56</div>
<div class="t" style="left:-489.5px;width:1000px;text-align:center;top:558.8px;font-size:4.5px;color:#888;font-weight:normal;">57</div>
<div class="t" style="left:-489.5px;width:1000px;text-align:center;top:574.8px;font-size:4.5px;color:#888;font-weight:normal;">58</div>
<div class="t" style="left:-489.5px;width:1000px;text-align:center;top:587.8px;font-size:4.5px;color:#888;font-weight:normal;">59</div>
<div class="t" style="left:-489.5px;width:1000px;text-align:center;top:600.8px;font-size:4.5px;color:#888;font-weight:normal;">60</div>
<div class="t" style="left:-489.5px;width:1000px;text-align:center;top:616.8px;font-size:4.5px;color:#888;font-weight:normal;">61</div>
<div class="t" style="left:-489.5px;width:1000px;text-align:center;top:639.8px;font-size:4.5px;color:#888;font-weight:normal;">62</div>
<div class="t" style="left:-489.5px;width:1000px;text-align:center;top:658.8px;font-size:4.5px;color:#888;font-weight:normal;">63</div>
<div class="t" style="left:32px;top:486.8px;font-size:6.4px;color:#333;font-weight:normal;">Melakukan penyiapan</div>
<div class="t" style="left:32px;top:493.8px;font-size:6.4px;color:#333;font-weight:normal;">alokasi dan analisis pagu</div>
<div class="t" style="left:32px;top:555.8px;font-size:6.4px;color:#333;font-weight:normal;">Melakukan perencanaan</div>
<div class="t" style="left:32px;top:562.8px;font-size:6.4px;color:#333;font-weight:normal;">dan penilaian proposal</div>
<div class="t" style="left:32px;top:569.8px;font-size:6.4px;color:#333;font-weight:normal;">inisiatif baru</div>
<div class="t" style="left:32px;top:628.8px;font-size:6.4px;color:#333;font-weight:normal;">Melakukan koordinasi</div>
<div class="t" style="left:32px;top:635.8px;font-size:6.4px;color:#333;font-weight:normal;">dan penyusunan kegiatan</div>
<div class="t" style="left:32px;top:642.8px;font-size:6.4px;color:#333;font-weight:normal;">prioritas nasional</div>
<div class="t" style="left:32px;top:649.8px;font-size:6.4px;color:#333;font-weight:normal;">(pemenuhan tiga pihak)</div>
<div class="t" style="left:22px;top:486.8px;font-size:6.4px;color:#333;font-weight:normal;">3</div>
<div class="t" style="left:22px;top:555.8px;font-size:6.4px;color:#333;font-weight:normal;">4</div>
<div class="t" style="left:22px;top:628.8px;font-size:6.4px;color:#333;font-weight:normal;">8</div>
<div class="t" style="left:120px;top:475.8px;font-size:6.4px;color:#333;font-weight:normal;">renungan analisis dan informasi kinerja</div>
<div class="t" style="left:110px;top:486.3px;font-size:6.4px;color:#333;font-weight:normal;">1</div>
<div class="t" style="left:120px;top:486.3px;font-size:6.4px;color:#333;font-weight:normal;">Mengidentifikasi dan mengembangkan data</div>
<div class="t" style="left:120px;top:493.3px;font-size:6.4px;color:#333;font-weight:normal;">terkait penyusunan pagu</div>
<div class="t" style="left:254px;top:486.3px;font-size:6.4px;color:#333;font-weight:normal;">Data penyusunan pagu</div>
<div class="t" style="left:-17px;width:1000px;text-align:center;top:486.9px;font-size:5.3px;color:#333;font-weight:bold;letter-spacing:-0.2px">#REF!</div>
<div class="t" style="left:16px;width:1000px;text-align:center;top:486.9px;font-size:5.3px;color:#333;font-weight:bold;letter-spacing:-0.2px">#REF!</div>
<div class="a" style="left:468px;top:486px;width:2px;height:2px;background:#333;"></div>
<div class="a" style="left:498px;top:486px;width:2px;height:2px;background:#333;"></div>
<div class="t" style="left:534px;width:42px;text-align:right;top:486.5px;font-size:6px;color:#333">3.14</div>
<div class="t" style="left:578px;width:28px;text-align:right;top:486.5px;font-size:6px;color:#333">2.86</div>
<div class="t" style="left:846px;width:30px;text-align:right;top:486.5px;font-size:6px;color:#555">1??</div>
<div class="t" style="left:110px;top:501.3px;font-size:6.4px;color:#333;font-weight:normal;">2</div>
<div class="t" style="left:120px;top:501.3px;font-size:6.4px;color:#333;font-weight:normal;">Menganalisis pagu per program</div>
<div class="t" style="left:254px;top:501.3px;font-size:6.4px;color:#333;font-weight:normal;">Hasil analisis pagu</div>
<div class="t" style="left:-17px;width:1000px;text-align:center;top:501.9px;font-size:5.3px;color:#333;font-weight:bold;letter-spacing:-0.2px">#REF!</div>
<div class="t" style="left:16px;width:1000px;text-align:center;top:501.9px;font-size:5.3px;color:#333;font-weight:bold;letter-spacing:-0.2px">#REF!</div>
<div class="a" style="left:468px;top:501px;width:2px;height:2px;background:#333;"></div>
<div class="a" style="left:498px;top:501px;width:2px;height:2px;background:#333;"></div>
<div class="t" style="left:534px;width:42px;text-align:right;top:501.5px;font-size:6px;color:#333">3.12</div>
<div class="t" style="left:578px;width:28px;text-align:right;top:501.5px;font-size:6px;color:#333">3.16</div>
<div class="t" style="left:608px;width:28px;text-align:right;top:501.5px;font-size:6px;color:#333">0.76</div>
<div class="t" style="left:846px;width:30px;text-align:right;top:501.5px;font-size:6px;color:#555">7</div>
<div class="a" style="left:977px;top:502px;width:2px;height:2px;background:#333;"></div>
<div class="t" style="left:110px;top:510.3px;font-size:6.4px;color:#333;font-weight:normal;">3</div>
<div class="t" style="left:120px;top:510.3px;font-size:6.4px;color:#333;font-weight:normal;">Menganalisis pagu per satker</div>
<div class="t" style="left:254px;top:510.3px;font-size:6.4px;color:#333;font-weight:normal;">Hasil analisis pagu per Eselon I</div>
<div class="t" style="left:-17px;width:1000px;text-align:center;top:510.9px;font-size:5.3px;color:#333;font-weight:bold;letter-spacing:-0.2px">#REF!</div>
<div class="t" style="left:16px;width:1000px;text-align:center;top:510.9px;font-size:5.3px;color:#333;font-weight:bold;letter-spacing:-0.2px">#REF!</div>
<div class="a" style="left:468px;top:510px;width:2px;height:2px;background:#333;"></div>
<div class="a" style="left:498px;top:510px;width:2px;height:2px;background:#333;"></div>
<div class="t" style="left:534px;width:42px;text-align:right;top:510.5px;font-size:6px;color:#333">7.18</div>
<div class="t" style="left:608px;width:28px;text-align:right;top:510.5px;font-size:6px;color:#333">0.25</div>
<div class="t" style="left:638px;width:28px;text-align:right;top:510.5px;font-size:6px;color:#333">0.25</div>
<div class="t" style="left:846px;width:30px;text-align:right;top:510.5px;font-size:6px;color:#555">9</div>
<div class="a" style="left:977px;top:511px;width:2px;height:2px;background:#333;"></div>
<div class="t" style="left:110px;top:518.3px;font-size:6.4px;color:#333;font-weight:normal;">4</div>
<div class="t" style="left:120px;top:518.3px;font-size:6.4px;color:#333;font-weight:normal;">Menganalisis pagu per sumber dana</div>
<div class="t" style="left:254px;top:518.3px;font-size:6.4px;color:#333;font-weight:normal;">Hasil analisis pagu per sumber dana</div>
<div class="t" style="left:-17px;width:1000px;text-align:center;top:518.9px;font-size:5.3px;color:#333;font-weight:bold;letter-spacing:-0.2px">#REF!</div>
<div class="t" style="left:16px;width:1000px;text-align:center;top:518.9px;font-size:5.3px;color:#333;font-weight:bold;letter-spacing:-0.2px">#REF!</div>
<div class="a" style="left:468px;top:518px;width:2px;height:2px;background:#333;"></div>
<div class="a" style="left:498px;top:518px;width:2px;height:2px;background:#333;"></div>
<div class="t" style="left:534px;width:42px;text-align:right;top:518.5px;font-size:6px;color:#333">6.01</div>
<div class="t" style="left:608px;width:28px;text-align:right;top:518.5px;font-size:6px;color:#333">0.40</div>
<div class="t" style="left:638px;width:28px;text-align:right;top:518.5px;font-size:6px;color:#333">0.27</div>
<div class="t" style="left:846px;width:30px;text-align:right;top:518.5px;font-size:6px;color:#555">2?</div>
<div class="a" style="left:977px;top:519px;width:2px;height:2px;background:#333;"></div>
<div class="t" style="left:110px;top:527.3px;font-size:6.4px;color:#333;font-weight:normal;">5</div>
<div class="t" style="left:120px;top:527.3px;font-size:6.4px;color:#333;font-weight:normal;">Menganalisis pagu untuk bagian anggaran</div>
<div class="t" style="left:254px;top:527.3px;font-size:6.4px;color:#333;font-weight:normal;">Hasil analisis pagu untuk bagian anggaran</div>
<div class="t" style="left:-17px;width:1000px;text-align:center;top:527.9px;font-size:5.3px;color:#333;font-weight:bold;letter-spacing:-0.2px">#REF!</div>
<div class="t" style="left:16px;width:1000px;text-align:center;top:527.9px;font-size:5.3px;color:#333;font-weight:bold;letter-spacing:-0.2px">#REF!</div>
<div class="a" style="left:468px;top:527px;width:2px;height:2px;background:#333;"></div>
<div class="a" style="left:498px;top:527px;width:2px;height:2px;background:#333;"></div>
<div class="t" style="left:534px;width:42px;text-align:right;top:527.5px;font-size:6px;color:#333">8.11</div>
<div class="t" style="left:638px;width:28px;text-align:right;top:527.5px;font-size:6px;color:#333">0.25</div>
<div class="t" style="left:110px;top:537.3px;font-size:6.4px;color:#333;font-weight:normal;">6</div>
<div class="t" style="left:120px;top:537.3px;font-size:6.4px;color:#333;font-weight:normal;">Menganalisis pagu berdasarkan kinerja</div>
<div class="t" style="left:254px;top:537.3px;font-size:6.4px;color:#333;font-weight:normal;">Hasil analisis pagu berdasarkan kinerja (Belanja dan pendapatan)</div>
<div class="t" style="left:-17px;width:1000px;text-align:center;top:537.9px;font-size:5.3px;color:#333;font-weight:bold;letter-spacing:-0.2px">#REF!</div>
<div class="t" style="left:16px;width:1000px;text-align:center;top:537.9px;font-size:5.3px;color:#333;font-weight:bold;letter-spacing:-0.2px">#REF!</div>
<div class="a" style="left:468px;top:537px;width:2px;height:2px;background:#333;"></div>
<div class="a" style="left:498px;top:537px;width:2px;height:2px;background:#333;"></div>
<div class="t" style="left:534px;width:42px;text-align:right;top:537.5px;font-size:6px;color:#333">6.19</div>
<div class="t" style="left:638px;width:28px;text-align:right;top:537.5px;font-size:6px;color:#333">0.27</div>
<div class="t" style="left:110px;top:546.3px;font-size:6.4px;color:#333;font-weight:normal;">7</div>
<div class="t" style="left:120px;top:546.3px;font-size:6.4px;color:#333;font-weight:normal;">Menyusun pagu</div>
<div class="t" style="left:254px;top:546.3px;font-size:6.4px;color:#333;font-weight:normal;">Draft pagu</div>
<div class="t" style="left:-17px;width:1000px;text-align:center;top:546.9px;font-size:5.3px;color:#333;font-weight:bold;letter-spacing:-0.2px">#REF!</div>
<div class="t" style="left:16px;width:1000px;text-align:center;top:546.9px;font-size:5.3px;color:#333;font-weight:bold;letter-spacing:-0.2px">#REF!</div>
<div class="a" style="left:468px;top:546px;width:2px;height:2px;background:#333;"></div>
<div class="a" style="left:498px;top:546px;width:2px;height:2px;background:#333;"></div>
<div class="t" style="left:534px;width:42px;text-align:right;top:546.5px;font-size:6px;color:#333">5.76</div>
<div class="t" style="left:638px;width:28px;text-align:right;top:546.5px;font-size:6px;color:#333">0.17</div>
<div class="t" style="left:846px;width:30px;text-align:right;top:546.5px;font-size:6px;color:#555">7</div>
<div class="a" style="left:977px;top:547px;width:2px;height:2px;background:#333;"></div>
<div class="t" style="left:110px;top:555.3px;font-size:6.4px;color:#333;font-weight:normal;">1</div>
<div class="t" style="left:120px;top:555.3px;font-size:6.4px;color:#333;font-weight:normal;">Mengidentifikasi dan mengembangkan data</div>
<div class="t" style="left:120px;top:562.3px;font-size:6.4px;color:#333;font-weight:normal;">dan parameter inisiatif baru</div>
<div class="t" style="left:254px;top:555.3px;font-size:6.4px;color:#333;font-weight:normal;">Data parameter proposal inisiatif baru</div>
<div class="t" style="left:-17px;width:1000px;text-align:center;top:555.9px;font-size:5.3px;color:#333;font-weight:bold;letter-spacing:-0.2px">#REF!</div>
<div class="t" style="left:16px;width:1000px;text-align:center;top:555.9px;font-size:5.3px;color:#333;font-weight:bold;letter-spacing:-0.2px">#REF!</div>
<div class="a" style="left:468px;top:555px;width:2px;height:2px;background:#333;"></div>
<div class="a" style="left:498px;top:555px;width:2px;height:2px;background:#333;"></div>
<div class="t" style="left:534px;width:42px;text-align:right;top:555.5px;font-size:6px;color:#333">3.47</div>
<div class="t" style="left:578px;width:28px;text-align:right;top:555.5px;font-size:6px;color:#333">2.47</div>
<div class="t" style="left:846px;width:30px;text-align:right;top:555.5px;font-size:6px;color:#555">7</div>
<div class="a" style="left:977px;top:556px;width:2px;height:2px;background:#333;"></div>
<div class="t" style="left:110px;top:570.3px;font-size:6.4px;color:#333;font-weight:normal;">2</div>
<div class="t" style="left:120px;top:570.3px;font-size:6.4px;color:#333;font-weight:normal;">Menganalisis kebutuhan inisiatif baru</div>
<div class="t" style="left:254px;top:570.3px;font-size:6.4px;color:#333;font-weight:normal;">Hasil analisis kebutuhan inisiatif baru</div>
<div class="t" style="left:-17px;width:1000px;text-align:center;top:570.9px;font-size:5.3px;color:#333;font-weight:bold;letter-spacing:-0.2px">#REF!</div>
<div class="t" style="left:16px;width:1000px;text-align:center;top:570.9px;font-size:5.3px;color:#333;font-weight:bold;letter-spacing:-0.2px">#REF!</div>
<div class="a" style="left:468px;top:570px;width:2px;height:2px;background:#333;"></div>
<div class="a" style="left:498px;top:570px;width:2px;height:2px;background:#333;"></div>
<div class="t" style="left:534px;width:42px;text-align:right;top:570.5px;font-size:6px;color:#333">3.05</div>
<div class="t" style="left:608px;width:28px;text-align:right;top:570.5px;font-size:6px;color:#333">0.16</div>
<div class="t" style="left:846px;width:30px;text-align:right;top:570.5px;font-size:6px;color:#555">7</div>
<div class="a" style="left:977px;top:571px;width:2px;height:2px;background:#333;"></div>
<div class="t" style="left:110px;top:586.3px;font-size:6.4px;color:#333;font-weight:normal;">3</div>
<div class="t" style="left:120px;top:586.3px;font-size:6.4px;color:#333;font-weight:normal;">Menyusun proposal inisiatif baru</div>
<div class="t" style="left:254px;top:586.3px;font-size:6.4px;color:#333;font-weight:normal;">Draft proposal</div>
<div class="t" style="left:-17px;width:1000px;text-align:center;top:586.9px;font-size:5.3px;color:#333;font-weight:bold;letter-spacing:-0.2px">#REF!</div>
<div class="t" style="left:16px;width:1000px;text-align:center;top:586.9px;font-size:5.3px;color:#333;font-weight:bold;letter-spacing:-0.2px">#REF!</div>
<div class="a" style="left:468px;top:586px;width:2px;height:2px;background:#333;"></div>
<div class="a" style="left:498px;top:586px;width:2px;height:2px;background:#333;"></div>
<div class="t" style="left:534px;width:42px;text-align:right;top:586.5px;font-size:6px;color:#333">4.76</div>
<div class="t" style="left:638px;width:28px;text-align:right;top:586.5px;font-size:6px;color:#333">0.20</div>
<div class="t" style="left:846px;width:30px;text-align:right;top:586.5px;font-size:6px;color:#555">7</div>
<div class="a" style="left:977px;top:587px;width:2px;height:2px;background:#333;"></div>
<div class="t" style="left:110px;top:596.3px;font-size:6.4px;color:#333;font-weight:normal;">4</div>
<div class="t" style="left:120px;top:596.3px;font-size:6.4px;color:#333;font-weight:normal;">Menilai kelayakan proposal inisiatif baru</div>
<div class="t" style="left:254px;top:596.3px;font-size:6.4px;color:#333;font-weight:normal;">Hasil penilaian proposal inisiatif baru</div>
<div class="t" style="left:-17px;width:1000px;text-align:center;top:596.9px;font-size:5.3px;color:#333;font-weight:bold;letter-spacing:-0.2px">#REF!</div>
<div class="t" style="left:16px;width:1000px;text-align:center;top:596.9px;font-size:5.3px;color:#333;font-weight:bold;letter-spacing:-0.2px">#REF!</div>
<div class="a" style="left:468px;top:596px;width:2px;height:2px;background:#333;"></div>
<div class="a" style="left:498px;top:596px;width:2px;height:2px;background:#333;"></div>
<div class="t" style="left:534px;width:42px;text-align:right;top:596.5px;font-size:6px;color:#333">8.58</div>
<div class="t" style="left:608px;width:28px;text-align:right;top:596.5px;font-size:6px;color:#333">0.25</div>
<div class="t" style="left:846px;width:30px;text-align:right;top:596.5px;font-size:6px;color:#555">7</div>
<div class="a" style="left:977px;top:597px;width:2px;height:2px;background:#333;"></div>
<div class="t" style="left:110px;top:612.3px;font-size:6.4px;color:#333;font-weight:normal;">5</div>
<div class="t" style="left:120px;top:612.3px;font-size:6.4px;color:#333;font-weight:normal;">Menyusun rekomendasi dan hasil penilaian</div>
<div class="t" style="left:120px;top:619.3px;font-size:6.4px;color:#333;font-weight:normal;">kelayakan proposal inisiatif baru</div>
<div class="t" style="left:254px;top:612.3px;font-size:6.4px;color:#333;font-weight:normal;">Rekomendasi kelayakan proposal inisiatif baru</div>
<div class="t" style="left:-17px;width:1000px;text-align:center;top:612.9px;font-size:5.3px;color:#333;font-weight:bold;letter-spacing:-0.2px">#REF!</div>
<div class="t" style="left:16px;width:1000px;text-align:center;top:612.9px;font-size:5.3px;color:#333;font-weight:bold;letter-spacing:-0.2px">#REF!</div>
<div class="a" style="left:468px;top:612px;width:2px;height:2px;background:#333;"></div>
<div class="a" style="left:498px;top:612px;width:2px;height:2px;background:#333;"></div>
<div class="t" style="left:534px;width:42px;text-align:right;top:612.5px;font-size:6px;color:#333">7.36</div>
<div class="t" style="left:638px;width:28px;text-align:right;top:612.5px;font-size:6px;color:#333">0.24</div>
<div class="t" style="left:110px;top:628.3px;font-size:6.4px;color:#333;font-weight:normal;">1</div>
<div class="t" style="left:120px;top:628.3px;font-size:6.4px;color:#333;font-weight:normal;">Mengidentifikasi dan mengembangkan data</div>
<div class="t" style="left:120px;top:635.3px;font-size:6.4px;color:#333;font-weight:normal;">dan parameter hasil koordinasi dan pem-</div>
<div class="t" style="left:120px;top:642.3px;font-size:6.4px;color:#333;font-weight:normal;">penilaian kegiatan prioritas nasional</div>
<div class="t" style="left:120px;top:649.3px;font-size:6.4px;color:#333;font-weight:normal;">(pemenuhan tiga pihak)</div>
<div class="t" style="left:254px;top:628.3px;font-size:6.4px;color:#333;font-weight:normal;">Data parameter pemenuhan tiga pihak</div>
<div class="t" style="left:-17px;width:1000px;text-align:center;top:628.9px;font-size:5.3px;color:#333;font-weight:bold;letter-spacing:-0.2px">#REF!</div>
<div class="t" style="left:16px;width:1000px;text-align:center;top:628.9px;font-size:5.3px;color:#333;font-weight:bold;letter-spacing:-0.2px">#REF!</div>
<div class="a" style="left:468px;top:628px;width:2px;height:2px;background:#333;"></div>
<div class="a" style="left:498px;top:628px;width:2px;height:2px;background:#333;"></div>
<div class="t" style="left:534px;width:42px;text-align:right;top:628.5px;font-size:6px;color:#333">3.15</div>
<div class="t" style="left:578px;width:28px;text-align:right;top:628.5px;font-size:6px;color:#333">0.17</div>
<div class="t" style="left:110px;top:659.3px;font-size:6.4px;color:#333;font-weight:normal;">2</div>
<div class="t" style="left:120px;top:659.3px;font-size:6.4px;color:#333;font-weight:normal;">Menganalisis rencana Prioritas Nasional</div>
<div class="t" style="left:254px;top:659.3px;font-size:6.4px;color:#333;font-weight:normal;">Hasil analisis rencana Prioritas Nasional</div>
<div class="t" style="left:-17px;width:1000px;text-align:center;top:659.9px;font-size:5.3px;color:#333;font-weight:bold;letter-spacing:-0.2px">#REF!</div>
<div class="t" style="left:16px;width:1000px;text-align:center;top:659.9px;font-size:5.3px;color:#333;font-weight:bold;letter-spacing:-0.2px">#REF!</div>
<div class="a" style="left:468px;top:659px;width:2px;height:2px;background:#333;"></div>
<div class="a" style="left:498px;top:659px;width:2px;height:2px;background:#333;"></div>
<div class="t" style="left:534px;width:42px;text-align:right;top:659.5px;font-size:6px;color:#333">12.53</div>
<div class="t" style="left:608px;width:28px;text-align:right;top:659.5px;font-size:6px;color:#333">0.25</div>
<svg class="a" style="left:5px;top:588px;" width="13" height="15" viewBox="0 0 13 15"><path d="M6.5 0.5 L10 4.5 H7.8 V6.3 H12.5 V8.2 H7.8 V10 H10 L6.5 14.5 L3 10 H5.2 V8.2 H0.5 V6.3 H5.2 V4.5 H3 Z" fill="#111" stroke="#fff" stroke-width="0.8"/></svg>
<div class="a" style="left:16px;top:595px;width:14px;height:16px;background:#cfe0d6;"></div>
<div class="a" style="left:16px;top:610px;width:14px;height:1.5px;background:#3a8a5a;"></div>
<div class="a" style="left:5px;top:664px;width:1016px;height:24px;background:#e1eae2;"></div>
<div class="a" style="left:5px;top:664px;width:1016px;height:6px;background:#e6e8e6;"></div>
<div class="a" style="left:96px;top:664px;width:95px;height:24px;background:#f4f6f5;"></div>
<div class="t" style="left:99px;top:669.9px;font-size:11.2px;color:#2a2a2a;font-weight:normal;text-shadow:0.35px 0 0 #2a2a2a;letter-spacing:-0.15px">Biro Perencanaan</div>
<div class="a" style="left:99px;top:682px;width:89px;height:2px;background:#3a6a50;"></div>
<div class="t" style="left:209px;top:672.2px;font-size:10.5px;color:#444;font-weight:normal;">Biro Perencanaan (2)</div>
<div class="t" style="left:331px;top:672.1px;font-size:10.7px;color:#333;font-weight:normal;">Sheet1</div>
<div class="t" style="left:408px;top:669.0px;font-size:14px;color:#444;font-weight:normal;">+</div>
<svg class="a" style="left:23px;top:671px;" width="6" height="10" viewBox="0 0 6 10"><path d="M5 1 L1 5 L5 9" stroke="#bbb" stroke-width="1.3" fill="none"/></svg>
<svg class="a" style="left:49px;top:671px;" width="6" height="10" viewBox="0 0 6 10"><path d="M1 1 L5 5 L1 9" stroke="#bbb" stroke-width="1.3" fill="none"/></svg>
<div class="a" style="left:630px;top:664px;width:376px;height:24px;background:#f3f3f3;"></div>
<svg class="a" style="left:634px;top:672px;" width="5" height="8" viewBox="0 0 5 8"><path d="M5 0 L0 4 L5 8z" fill="#555"/></svg>
<div class="a" style="left:643px;top:673px;width:207px;height:6px;background:#777;border-radius:3px"></div>
<svg class="a" style="left:995px;top:672px;" width="5" height="8" viewBox="0 0 5 8"><path d="M0 0 L5 4 L0 8z" fill="#555"/></svg>
<svg class="a" style="left:615px;top:670px;" width="3" height="12" viewBox="0 0 3 12"><circle cx="1.5" cy="2" r="0.9" fill="#888"/><circle cx="1.5" cy="6" r="0.9" fill="#888"/><circle cx="1.5" cy="10" r="0.9" fill="#888"/></svg>
<div class="a" style="left:5px;top:688px;width:1016px;height:18px;background:#f5f5f7;"></div>
<div class="t" style="left:14px;top:694.9px;font-size:8.3px;color:#777;font-weight:normal;">Ready</div>
<svg class="a" style="left:52px;top:692px;" width="12" height="12" viewBox="0 0 12 12"><circle cx="6" cy="2" r="1.5" fill="#555"/><path d="M1 4.5 H11 M6 4.5 V8 L3 11.5 M6 8 L9 11.5" stroke="#555" stroke-width="1.3" fill="none"/></svg>
<div class="t" style="left:66px;top:694.9px;font-size:8.3px;color:#333;font-weight:bold;">Accessibility: Investigate</div>
<div class="t" style="left:740px;top:694.9px;font-size:8.3px;color:#666;font-weight:normal;">Count: 19</div>
<div class="a" style="left:790px;top:690px;width:26px;height:15px;background:#e8e8ea;"></div>
<svg class="a" style="left:799px;top:692px;" width="12" height="11" viewBox="0 0 12 11"><path d="M0.5 0.5 H11.5 V10.5 H0.5 Z M0.5 4 H11.5 M0.5 7.3 H11.5 M4.3 0.5 V10.5 M7.7 0.5 V10.5" stroke="#444" stroke-width="1" fill="none"/></svg>
<svg class="a" style="left:830px;top:692px;" width="12" height="11" viewBox="0 0 12 11"><rect x="0.5" y="0.5" width="11" height="10" stroke="#444" stroke-width="1" fill="none"/><rect x="3" y="3" width="6" height="5" stroke="#444" stroke-width="0.9" fill="none"/></svg>
<svg class="a" style="left:861px;top:692px;" width="12" height="11" viewBox="0 0 12 11"><rect x="0.5" y="0.5" width="11" height="10" stroke="#444" stroke-width="1" fill="none"/><path d="M3 5.5 H8 V8" stroke="#444" stroke-width="0.9" fill="none"/></svg>
<div class="a" style="left:889px;top:698px;width:5px;height:1px;background:#666;"></div>
<div class="a" style="left:898px;top:698px;width:85px;height:1px;background:#888;"></div>
<div class="a" style="left:917px;top:693px;width:3px;height:10px;background:#555;border-radius:1px"></div>
<svg class="a" style="left:938px;top:697px;" width="4" height="4" viewBox="0 0 4 4"><circle cx="1.5" cy="1.5" r="1.5" fill="#666"/></svg>
<div class="t" style="left:982px;top:694.5px;font-size:8px;color:#555;font-weight:normal;">+</div>
<div class="t" style="left:997px;top:694.5px;font-size:8px;color:#444;font-weight:normal;">33%</div>
<div class="a" style="left:1092px;top:96px;width:136px;height:79px;border-radius:7px;background:#8aeebc"></div>
<div class="a" style="left:1094px;top:98px;width:132px;height:75px;border-radius:5px;overflow:hidden;background:linear-gradient(180deg,#f2f1f3 0%,#eeedf0 60%,#e8e6ea 100%)"><div class="a" style="left:0;top:22px;width:60px;height:30px;background:#e6e4ea;opacity:.7"></div><div class="a" style="left:97px;top:45px;width:25px;height:22px;border-radius:50%;background:radial-gradient(#f2b828 0%,#f0b838 55%,rgba(240,200,90,0) 75%)"></div><div class="a" style="left:74px;top:51px;width:21px;height:22px;background:linear-gradient(90deg,#3e3030,#5a4a48 50%,#3a2e2e);clip-path:polygon(0 25%,60% 0,100% 20%,100% 100%,0 100%)"></div><div class="a" style="left:95px;top:55px;width:15px;height:18px;background:linear-gradient(90deg,#6a5a50,#4a3e3a)"></div><div class="a" style="left:108px;top:58px;width:10px;height:15px;background:#3a3040"></div><div class="a" style="left:56px;top:67px;width:76px;height:8px;background:linear-gradient(180deg,rgba(50,70,55,.6),#264a30)"></div><div class="a" style="left:46px;top:64px;width:10px;height:8px;border-radius:50% 50% 0 0;background:#2a3e30"></div><div class="a" style="left:0;top:55px;width:6px;height:18px;background:#4a4e50"></div><div class="a" style="left:8px;top:9px;width:5px;height:5px;background:#666;border-radius:1px"></div><div class="a" style="left:15px;top:10px;width:14px;height:3px;background:#999;opacity:.6"></div><div class="a" style="left:123px;top:0;width:3px;height:75px;background:#dcdce0"></div><div class="a" style="left:121px;top:8px;width:4px;height:4px;border-radius:50%;background:#2a4a7a"></div><div class="a" style="left:121px;top:14px;width:4px;height:4px;border-radius:50%;background:#2a4a7a"></div><div class="a" style="left:121px;top:20px;width:4px;height:4px;border-radius:50%;background:#2a4a7a"></div></div>
<div class="a" style="left:1095px;top:155px;width:47px;height:16px;background:#2c3a4c;border-radius:3px;opacity:.92"></div>
<div class="t" style="left:1097.5px;top:158.2px;font-size:10.5px;color:#eee;font-weight:normal;">DJA-Susi</div>
<div class="a" style="left:1092px;top:175px;width:136px;height:75px;background:linear-gradient(180deg,#e0e2ea,#dcdde6 65%,#e6e6ec 70%,#d8d8de);overflow:hidden"><div class="a" style="left:63px;top:9px;width:38px;height:50px;border-radius:46% 46% 40% 40%;background:linear-gradient(180deg,#b8a4ac 0%,#8a6a68 25%,#6e4c4a 60%,#5a3438 100%)"></div><div class="a" style="left:67px;top:27px;width:30px;height:8px;border-radius:3px;background:#4a2424;filter:blur(1px)"></div><div class="a" style="left:72px;top:46px;width:22px;height:10px;border-radius:3px;background:#5a2a3a;filter:blur(1px)"></div><div class="a" style="left:52px;top:56px;width:62px;height:20px;border-radius:30% 30% 0 0;background:#505050"></div></div>
<div class="a" style="left:1094px;top:231px;width:134px;height:17px;background:rgba(70,70,70,.85);"></div>
<svg class="a" style="left:1096px;top:233px;" width="13" height="12" viewBox="0 0 13 12"><rect x="0" y="0" width="13" height="12" fill="#7a2a3a" opacity=".55"/><path d="M4 2 L9 2 L6 6 L9 6 L4 11 L6 7 L3 7 Z" fill="#e86a80"/></svg>
<div class="t" style="left:1114px;top:234.8px;font-size:10.5px;color:#f0f0f0;font-weight:normal;">Wilson Muskitta_Kan</div>
<div class="a" style="left:1092px;top:249px;width:136px;height:3px;background:#0a0c10;"></div>
<div class="a" style="left:1130px;top:258px;width:60px;height:60px;background:#317a22;border-radius:4px;box-shadow:0 0 1px #4a9a3a"></div>
<div class="t" style="left:1150px;top:268.0px;font-size:38px;color:#f0f8e8;font-weight:normal;transform:scaleX(0.85);transform-origin:left">d</div>
<div class="a" style="left:1088px;top:304px;width:72px;height:18px;background:#060606;"></div>
<div class="t" style="left:1097px;top:310.7px;font-size:10.6px;color:#f4f4f4;font-weight:normal;">DEWODEWI</div>
<div class="a" style="left:1091px;top:322px;width:139px;height:79px;background:#000;"></div>
<div class="a" style="left:1094px;top:384px;width:50px;height:16px;background:rgba(45,45,45,.9);"></div>
<svg class="a" style="left:1096px;top:386px;" width="13" height="12" viewBox="0 0 13 12"><rect x="0" y="0" width="13" height="12" fill="#7a2a3a" opacity=".55"/><path d="M4 2 L9 2 L6 6 L9 6 L4 11 L6 7 L3 7 Z" fill="#e86a80"/></svg>
<div class="t" style="left:1112px;top:386.9px;font-size:11.3px;color:#eee;font-weight:normal;">Andia</div>
<div class="a" style="left:1092px;top:402px;width:136px;height:76px;overflow:hidden;background:linear-gradient(180deg,#f2f4f2 0%,#eceeec 40%,#e4e6e2 100%)"><div class="a" style="left:26px;top:17px;width:100px;height:46px;background:linear-gradient(180deg,#e4e8e4 0%,#d6dad6 30%,#dde0dc 60%,#c8ccc4 100%)"></div><div class="a" style="left:26px;top:24px;width:100px;height:2px;background:#c0c6c0"></div><div class="a" style="left:58px;top:20px;width:30px;height:10px;background:#cfd6d0"></div><div class="a" style="left:70px;top:9px;width:4px;height:10px;background:#c8ccc8"></div><div class="a" style="left:0;top:20px;width:20px;height:48px;background:linear-gradient(180deg,#4c5264,#70727a 50%,#a8a8aa)"></div><div class="a" style="left:36px;top:38px;width:22px;height:30px;border-radius:40% 40% 0 0;background:linear-gradient(180deg,#8a9088,#5a5a52)"></div><div class="a" style="left:60px;top:46px;width:16px;height:24px;background:linear-gradient(180deg,#8a9a70,#3e4a2a)"></div><div class="a" style="left:96px;top:28px;width:30px;height:48px;background:#e6c6ca"></div><div class="a" style="left:80px;top:36px;width:32px;height:40px;border-radius:45% 45% 15% 15%;background:linear-gradient(180deg,#c0a898,#9a8272)"></div><div class="a" style="left:126px;top:30px;width:10px;height:46px;background:linear-gradient(180deg,#b8b8b0,#8a8a80)"></div><div class="a" style="left:0;top:56px;width:136px;height:20px;background:rgba(70,70,60,.3)"></div></div>
<div class="a" style="left:1095px;top:462px;width:118px;height:14px;background:rgba(60,55,55,.82);border-radius:2px"></div>
<svg class="a" style="left:1096px;top:463px;" width="13" height="12" viewBox="0 0 13 12"><rect x="0" y="0" width="13" height="12" fill="#7a2a3a" opacity=".55"/><path d="M4 2 L9 2 L6 6 L9 6 L4 11 L6 7 L3 7 Z" fill="#e86a80"/></svg>
<div class="t" style="left:1113px;top:464.3px;font-size:10.4px;color:#f0f0f0;font-weight:normal;">Kanwil Banten_Esy 3</div>
<div class="t" style="left:660px;width:1000px;text-align:center;top:509.5px;font-size:12px;color:#fff;font-weight:bold;letter-spacing:0.1px">Fajrin_Kanwil&nbsp; Su...</div>
<div class="a" style="left:1089px;top:528px;width:127px;height:30px;background:#181a1e;"></div>
<div class="a" style="left:1094px;top:536px;width:114px;height:16px;background:#222326;"></div>
<svg class="a" style="left:1095px;top:538px;" width="13" height="12" viewBox="0 0 13 12"><rect x="0" y="0" width="13" height="12" fill="#7a2a3a" opacity=".55"/><path d="M4 2 L9 2 L6 6 L9 6 L4 11 L6 7 L3 7 Z" fill="#e86a80"/></svg>
<div class="t" style="left:1112px;top:539.0px;font-size:10.9px;color:#d8d8d8;font-weight:normal;">Fajrin_Kanwil Sulsel</div>
<div class="t" style="left:660px;width:1000px;text-align:center;top:586.0px;font-size:12px;color:#fff;font-weight:bold;">indra</div>
<div class="a" style="left:1092px;top:626px;width:136px;height:78px;border-radius:6px 6px 0 0;overflow:hidden;background:#3a1a1c"><div class="a" style="left:0;top:8px;width:45px;height:70px;background:repeating-linear-gradient(90deg,#4a1818 0 2px,#e0c0b8 2px 4px,#8a3a38 4px 6px,#c89888 6px 7px,#4a1818 7px 9px)"></div><div class="a" style="left:0;top:8px;width:45px;height:70px;background:repeating-linear-gradient(180deg,rgba(30,5,5,.55) 0 3px,rgba(255,235,230,.08) 3px 9px,rgba(30,5,5,.3) 9px 11px)"></div><div class="a" style="left:0;top:0;width:45px;height:8px;background:repeating-linear-gradient(90deg,#d8c0b0 0 3px,#6a3a30 3px 6px)"></div><div class="a" style="left:45px;top:12px;width:23px;height:66px;background:repeating-linear-gradient(90deg,#3a2228 0 2px,#b89aa0 2px 3.5px,#5a3a48 3.5px 5.5px)"></div><div class="a" style="left:45px;top:12px;width:23px;height:66px;background:repeating-linear-gradient(180deg,rgba(0,0,0,.45) 0 3px,rgba(255,255,255,.05) 3px 8px)"></div><div class="a" style="left:68px;top:12px;width:21px;height:66px;background:linear-gradient(90deg,#a82a22,#c83a2a 40%,#d04030 60%,#902018)"></div><div class="a" style="left:89px;top:10px;width:11px;height:68px;background:linear-gradient(90deg,#d8f0f4,#b8ecf6 50%,#d0e8ec)"></div><div class="a" style="left:100px;top:12px;width:16px;height:66px;background:linear-gradient(90deg,#4a3430,#8a6458 40%,#6a4a40)"></div><div class="a" style="left:116px;top:12px;width:9px;height:66px;background:#34343c"></div><div class="a" style="left:125px;top:0;width:11px;height:78px;background:repeating-linear-gradient(180deg,#c8a890 0 4px,#5a3028 4px 8px,#b89078 8px 11px)"></div><div class="a" style="left:48px;top:0;width:44px;height:12px;background:#2e2a2c"></div><div class="a" style="left:92px;top:0;width:32px;height:10px;background:#d84a30"></div></div>
<div class="a" style="left:1095px;top:688px;width:80px;height:14px;background:rgba(50,40,40,.72);"></div>
<svg class="a" style="left:1096px;top:689px;" width="13" height="12" viewBox="0 0 13 12"><rect x="0" y="0" width="13" height="12" fill="#7a2a3a" opacity=".55"/><path d="M4 2 L9 2 L6 6 L9 6 L4 11 L6 7 L3 7 Z" fill="#e86a80"/></svg>
<div class="t" style="left:1113px;top:690.0px;font-size:11px;color:#f0f0f0;font-weight:normal;letter-spacing:-0.4px">HILLON NTT</div>
<div class="a" style="left:1089px;top:608px;width:55px;height:18px;background:#1a1b1e;"></div>
<svg class="a" style="left:1095px;top:612px;" width="13" height="12" viewBox="0 0 13 12"><rect x="0" y="0" width="13" height="12" fill="#7a2a3a" opacity=".55"/><path d="M4 2 L9 2 L6 6 L9 6 L4 11 L6 7 L3 7 Z" fill="#e86a80"/></svg>
<div class="t" style="left:1111px;top:613.2px;font-size:11.5px;color:#e0e0e0;font-weight:normal;">indra</div>
<div class="a" style="left:1092px;top:704px;width:136px;height:78px;border-radius:0 0 6px 6px;overflow:hidden;background:#fafafa"><div class="a" style="left:0;top:0;width:29px;height:14px;background:repeating-linear-gradient(115deg,#d0ec70 0 2.3px,#4a6808 2.3px 4.4px)"></div><div class="a" style="left:109px;top:0;width:27px;height:14px;background:repeating-linear-gradient(115deg,#d0ec70 0 2.3px,#4a6808 2.3px 4.4px)"></div><div class="a" style="left:65px;top:5px;width:7px;height:6px;background:#222"></div><div class="a" style="left:46px;top:13px;width:45px;height:2px;background:#bbb"></div><div class="a" style="left:28px;top:19px;width:80px;height:2px;background:#777"></div><div class="a" style="left:56px;top:23px;width:24px;height:3px;background:#d8d030"></div><div class="a" style="left:6px;top:20px;width:19px;height:19px;border-radius:50%;border:2px solid #555"></div><div class="a" style="left:12px;top:26px;width:7px;height:7px;border-radius:50%;border:1.5px solid #555"></div><div class="a" style="left:9px;top:40px;width:13px;height:22px;border:2px solid #666;border-top-width:3px"></div><div class="a" style="left:44px;top:32px;width:40px;height:28px;background:#eef2f4;border-radius:40%"></div><div class="a" style="left:112px;top:28px;width:22px;height:44px;background:radial-gradient(circle,#a08088 1.5px,transparent 2px) 0 0/6px 6px"></div></div>
<div class="a" style="left:1096px;top:765px;width:102px;height:15px;background:rgba(80,80,80,.9);border-radius:3px"></div>
<svg class="a" style="left:1097px;top:766px;" width="13" height="12" viewBox="0 0 13 12"><rect x="0" y="0" width="13" height="12" fill="#7a2a3a" opacity=".55"/><path d="M4 2 L9 2 L6 6 L9 6 L4 11 L6 7 L3 7 Z" fill="#e86a80"/></svg>
<div class="t" style="left:1114px;top:767.5px;font-size:10px;color:#eee;font-weight:normal;letter-spacing:-0.6px">o s h o r i p u m c l</div>
</body></html>
